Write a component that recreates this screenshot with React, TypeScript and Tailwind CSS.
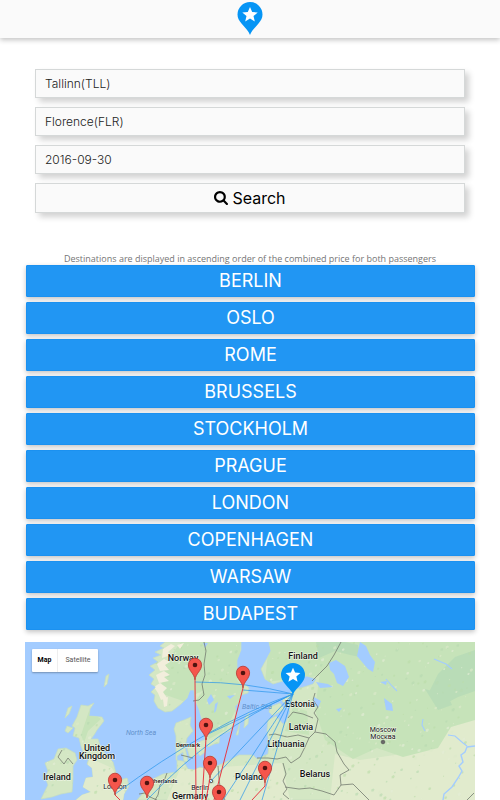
import { useState } from "react";

const cities = [
  "BERLIN", "OSLO", "ROME", "BRUSSELS", "STOCKHOLM",
  "PRAGUE", "LONDON", "COPENHAGEN", "WARSAW", "BUDAPEST",
];

const fieldClass =
  "block h-[29px] w-full border border-[#d5d8d8] bg-[#fafafa] px-[9px] text-xs font-light text-[#222] shadow-[4px_4px_6px_rgba(0,0,0,0.18)] outline-none";

function StarPin() {
  return (
    <>
      <path d="M12.500 33C11 28.500 7.500 26 4 21.500C1.500 18.500 0 16 0 12.500A12.500 12.500 0 0 1 25 12.500C25 16 23.500 18.500 21 21.500C17.500 26 14 28.500 12.500 33Z" fill="#0695f5" />
      <path d="M12.500 5 14.700 10 20.200 10.500 16 14.100 17.300 19.500 12.500 16.600 7.700 19.500 9 14.100 4.800 10.500 10.300 10Z" fill="#fff" />
    </>
  );
}

function SearchIcon() {
  return (
    <svg className="size-[14px]" viewBox="0 128 1664 1664" fill="currentColor" aria-hidden="true">
      <path d="M1152 832q0-185-131.500-316.500t-316.500-131.500-316.500 131.500-131.500 316.500 131.500 316.500 316.500 131.500 316.500-131.500 131.500-316.500zm512 832q0 52-38 90t-90 38q-54 0-90-38l-343-342q-179 124-399 124-143 0-273.500-55.500t-225-150-150-225-55.500-273.500 55.500-273.500 150-225 225-150 273.500-55.500 273.500 55.500 225 150 150 225 55.500 273.500q0 220-124 399l343 343q37 37 37 90z" />
    </svg>
  );
}

function RedPin({ x, y }: { x: number; y: number }) {
  return (
    <g transform={`translate(${x} ${y})`}>
      <path d="M0 0C-.8-7-6.600-9-6.600-15.200A6.600 6.600 0 0 1 6.600-15.200C6.600-9 .8-7 0 0Z" fill="#f5564c" stroke="#b9342e" strokeWidth=".8" />
      <circle cy="-15" r="2.300" fill="#50130f" />
    </g>
  );
}

const land = [
  // Norway and Sweden
  "M165 642 160 646 164 648 155 652 161 655 153 658 158 662 150 666 155 670 149 675 154 679 151 684 156 687 151 692 155 695 154 701 158 708 165 712 172 711 181 704 187 698 190 690 194 690 195 700 199 709 202 720 204 729 205 740 208 747 214 744 219 743 220 735 230 731 234 724 236 715 235 706 240 702 241 695 248 693 249 688 242 681 237 674 237 660 241 650 241 642Z",
  // Finland, the Baltic coast and northern Russia
  "M269 642 271 651 266 660 261 669 265 679 273 684 283 681 293 678 307 676 316 679 313 684 304 687 293 690 287 696 282 701 288 706 290 712 286 722 283 724 276 716 268 720 267 730 269 744 268 754 257 759 253 755 239 755 228 761 217 766 207 769 200 767 194 770 188 769 184 762 183 752 177 756 177 772 163 774 151 780 144 792 137 800 475 800 475 642Z",
  // Jutland and Danish islands
  "M176 760 176 736 174 729 176 723 184 720 191 717 190 725 193 731 187 738 185 747 188 762Z",
  "M187 748 194 745 197 755 190 758Z",
  "M199 742 206 739 205 752 200 756 196 750Z",
  "M203 759 214 756 210 762Z",
  // Baltic islands
  "M245 718 249 713 248 724 244 728Z",
  "M239 726 240 721 238 735 236 735Z",
  "M270 707 280 703 284 709 273 716 269 712Z",
  // Great Britain and Ireland
  "M81 705 88 706 94 703 90 709 89 716 102 717 104 721 97 730 94 735 91 739 98 739 101 748 106 755 113 762 116 773 120 780 127 778 129 786 124 794 123 800 76 800 82 795 91 792 83 787 86 778 93 777 92 768 87 764 89 758 84 758 83 752 81 746 79 738 73 736 75 728 72 726 77 717Z",
  "M58 749 66 748 75 753 77 760 73 766 73 779 72 792 61 794 52 797 41 799 44 793 48 785 45 777 48 771 45 763 54 759Z",
  "M68 708 72 706 69 714 65 718Z",
  "M67 726 73 728 68 733 65 731Z",
  "M106 676 109 674 107 684 104 687Z",
];

const lines = [
  "M293 694Q247 682 195 682", "M293 694 243 690", "M293 694 206 735",
  "M293 694Q210 724 115 794", "M293 694Q214 729 147 800", "M293 694 210 782",
  "M293 694 223 800", "M293 694 240 800", "M293 694 262 800",
];

const borders = [
  "M204 642 206 651 204 664 205 675 202 684 204 695 199 700 193 701",
  "M341 642 334 655 327 666 320 673 312 681",
  "M315 693 313 700 318 707 314 713 318 719 315 732 309 738 298 735 287 737 275 734 269 735",
  "M288 718 293 712 303 714 313 718",
  "M315 732 326 734 335 742 337 752 344 764 349 770 340 775 341 785",
  "M257 758 268 758 277 759 286 757 291 763 300 757 305 747 309 738",
  "M283 763 286 774 283 781 287 789 283 794 289 799",
  "M285 787 299 789 310 788 322 791 334 795 341 785 353 784 360 791 369 800",
  "M218 766 219 779 221 793 225 800",
  "M181 755 193 758", "M167 773 164 781 160 785 158 795 155 800",
  "M467 800 474 793", "M62 750 58 757 64 764 68 758 73 764",
  "M139 794 145 793 150 797 157 800",
];

const lakes = [
  "M329 663 336 660 345 666 349 677 343 686 337 683 334 674 330 670Z",
  "M360 642 366 646 370 655 375 662 373 672 368 669 362 662 357 656Z",
  "M316 682 328 684 333 687 320 688Z",
  "M384 698 392 704 393 711 386 710Z",
  "M380 682 387 681 386 685Z", "M336 709 342 708 339 712Z",
  "M314 697 321 701 318 708 313 703Z",
  "M207 700 211 694 214 700 209 705Z", "M215 704 218 702 216 711 214 713Z",
  "M203 643 208 643 205 648Z", "M227 696 235 695 230 699Z",
];

const forests = [
  "M320 642H475V720L451 727 438 748 403 757 377 748 353 759 325 740 315 710 320 672Z",
  "M165 663 181 642 241 642 237 680 245 690 226 730 209 739 196 700 204 690 183 701 160 693Z",
  "M269 642H325L319 676 265 682Z",
  "M89 711 101 719 88 731 84 743 81 735Z",
  "M293 707 307 711 309 735 285 731Z",
];

const deepForests = [
  "M438 674 455 657 475 650 475 691 458 697 443 705 429 692Z",
  "M316 642 345 642 358 645 360 657 350 655 335 651 319 658Z",
  "M425 689 448 696 452 705 438 710Z",
];

// Repeatable positions for small terrain patches.
const terrain = Array.from({ length: 620 }, (_, i) => {
  const x = 25 + ((i * 173.17) % 450);
  const y = 642 + ((i * 71.73 + ((i * i) % 43)) % 158);
  const r = 0.8 + ((i * 7) % 5) / 3;
  return { x, y, r, tone: i % 4 };
});

const tones = ["#bcdda9", "#dce9c9", "#b9dab0", "#e4edd5"];

// Pale mountain ridges and snowfields of western Norway.
const ridges = [
  "M163 649l8-5 4 2-7 6 3 3-9 3z", "M157 664l7-5 6 3-5 3 4 5-9 1z",
  "M156 675l8-4 6 4-6 2 5 4-10 2z", "M154 687l6-4 7 5-4 4 4 6-6 2-3-7z",
  "M163 699l5-2-1 9-3 1z", "M177 645l7-2-4 6z",
];

const labels: [string, number, number, number, number][] = [
  ["Norway", 183, 661, 9, 500], ["Finland", 303, 659, 9, 500],
  ["Estonia", 300, 707, 9, 500], ["Latvia", 301, 730, 9, 500],
  ["Lithuania", 286, 747, 9, 500], ["Belarus", 315, 777, 9, 500],
  ["Poland", 249, 780, 9, 500], ["Germany", 190, 799, 9, 500],
  ["United", 97, 751, 9, 500], ["Kingdom", 97, 759, 9, 500],
  ["Ireland", 57, 780, 9, 500], ["Denmark", 188, 747, 6, 600],
  ["Netherlands", 161, 783, 6, 500], ["London", 115, 789, 7, 400],
  ["Berlin", 200, 790, 7, 400], ["Moscow", 383, 732, 7, 400],
  ["Москва", 383, 739, 7, 400],
];

function EuropeMap() {
  return (
    <svg className="block h-[158px] w-full" viewBox="25 642 450 158" preserveAspectRatio="xMidYMin slice" role="img" aria-label="Flight map">
      <defs>
        <clipPath id="land"><path d={land.join("")} /></clipPath>
      </defs>
      <rect x="25" y="642" width="450" height="158" fill="#a3ccff" />
      <path d={land.join("")} fill="#d4e7c4" stroke="#c6dec0" strokeWidth=".7" />
      <g clipPath="url(#land)">
        <path d="M335 754 360 760 395 755 431 736 450 710 475 701 475 800 330 800Z M180 769 222 767 282 763 290 800 167 800Z M90 758 112 768 129 800 75 800Z" fill="#e1ebcd" />
        <path d={forests.join("")} fill="#c6e3b9" />
        <path d={deepForests.join("")} fill="#b9dcb7" />
        {terrain.map(({ x, y, r, tone }, i) => (
          <path key={i} d={`M${x} ${y}l${r} ${-r / 2} ${r / 2} ${r / 2} ${-r / 2} ${r} ${-r} 0Z`} fill={tones[tone]} opacity=".65" />
        ))}
        <path d={ridges.join("")} fill="#f2eedc" />
      </g>
      <path d={lakes.join("")} fill="#a3ccff" />
      <g fill="none" stroke="#a3ccff">
        <path strokeWidth="1.400" d="M475 746 467 747 465 752 461 755 463 762 459 766 462 771 458 778 452 787 444 794 443 800" />
        <path strokeWidth="1.100" d="M423 719 422 725 425 731M448 735 455 736 463 743 467 746M386 679 392 686 397 691M434 659 446 664 452 669" />
      </g>
      <path d={borders.join("")} fill="none" stroke="#747b70" strokeWidth=".8" strokeLinejoin="round" />
      <g fontFamily="Roboto, sans-serif" textAnchor="middle" fill="#111" stroke="#f5faee" strokeWidth="1" strokeLinejoin="round" paintOrder="stroke">
        {labels.map(([text, x, y, size, weight]) => (
          <text key={text} x={x} y={y} fontSize={size} fontWeight={weight}>{text}</text>
        ))}
      </g>
      <g fontFamily="Roboto, sans-serif" fontSize="7" fontStyle="italic" fill="#6290cb" textAnchor="middle">
        <text x="141" y="735">North Sea</text>
        <text x="257" y="709">Baltic Sea</text>
      </g>
      <g fill="#fff" stroke="#333" strokeWidth=".8">
        <circle cx="383" cy="742" r="1.800" /><circle cx="211" cy="781" r="1.800" />
      </g>
      <circle cx="383" cy="742" r=".9" fill="#222" />
      <path d={lines.join("")} fill="none" stroke="#2795ec" strokeWidth=".7" />
      <path d="M195 680 196 800M243 688 214 800M206 738 202 800M210 778 206 800M265 783 265 786 252 800M115 795 120 800" fill="none" stroke="#e63944" strokeWidth="1" />
      <RedPin x={195} y={680} /><RedPin x={243} y={688} />
      <RedPin x={206} y={740} /><RedPin x={210} y={778} />
      <RedPin x={265} y={783} /><RedPin x={115} y={795} />
      <RedPin x={147} y={798} /><RedPin x={219} y={807} />
      <g transform="translate(281 663) scale(.96)"><StarPin /></g>
    </svg>
  );
}

export default function App() {
  const [from, setFrom] = useState("Tallinn(TLL)");
  const [to, setTo] = useState("Florence(FLR)");
  const [date, setDate] = useState("2016-09-30");

  return (
    <div className="overflow-hidden bg-white font-['Inter',sans-serif]">
      <header className="flex h-[38px] justify-center bg-[#fafafa] pt-[2px] shadow-[0_2px_5px_rgba(0,0,0,0.24)]">
        <svg className="h-[33px] w-[26px]" viewBox="0 0 25 33" aria-label="Travel finder"><StarPin /></svg>
      </header>
      <main>
        <form className="flex flex-col gap-[9px] px-[35px] pt-[31px]" onSubmit={(e) => e.preventDefault()}>
          <input aria-label="From" className={fieldClass} value={from} onChange={(e) => setFrom(e.target.value)} />
          <input aria-label="To" className={fieldClass} value={to} onChange={(e) => setTo(e.target.value)} />
          <input aria-label="Departure date" className={fieldClass} value={date} onChange={(e) => setDate(e.target.value)} />
          <button className="flex h-[30px] w-full items-center justify-center gap-1 border border-[#d5d8d8] bg-[#fafafa] text-base text-black shadow-[4px_4px_6px_rgba(0,0,0,0.18)]">
            <SearchIcon /> Search
          </button>
        </form>
        <section className="px-[25px] pt-10">
          <p className="text-center font-['Open_Sans',sans-serif] text-[9px] leading-3 text-[#757575]">
            Destinations are displayed in ascending order of the combined price for both passengers
          </p>
          <div className="flex flex-col gap-[5px] pl-px">
            {cities.map((city) => (
              <button key={city} className="h-8 w-full rounded-[1px] border border-[#1b91f0] bg-[#2196f3] text-lg leading-none text-white shadow-[0_2px_5px_rgba(0,0,0,0.24)]">
                {city}
              </button>
            ))}
          </div>
          <div className="relative mt-3">
            <EuropeMap />
            <div className="absolute top-[7px] left-[7px] flex h-[23px] rounded-[1px] bg-white font-['Roboto',sans-serif] text-[7px] shadow-[0_1px_2px_rgba(0,0,0,0.3)]">
              <button className="w-[26px] border-r border-[#eee] font-bold text-black">Map</button>
              <button className="w-10 text-[#555]">Satellite</button>
            </div>
          </div>
        </section>
      </main>
    </div>
  );
}
